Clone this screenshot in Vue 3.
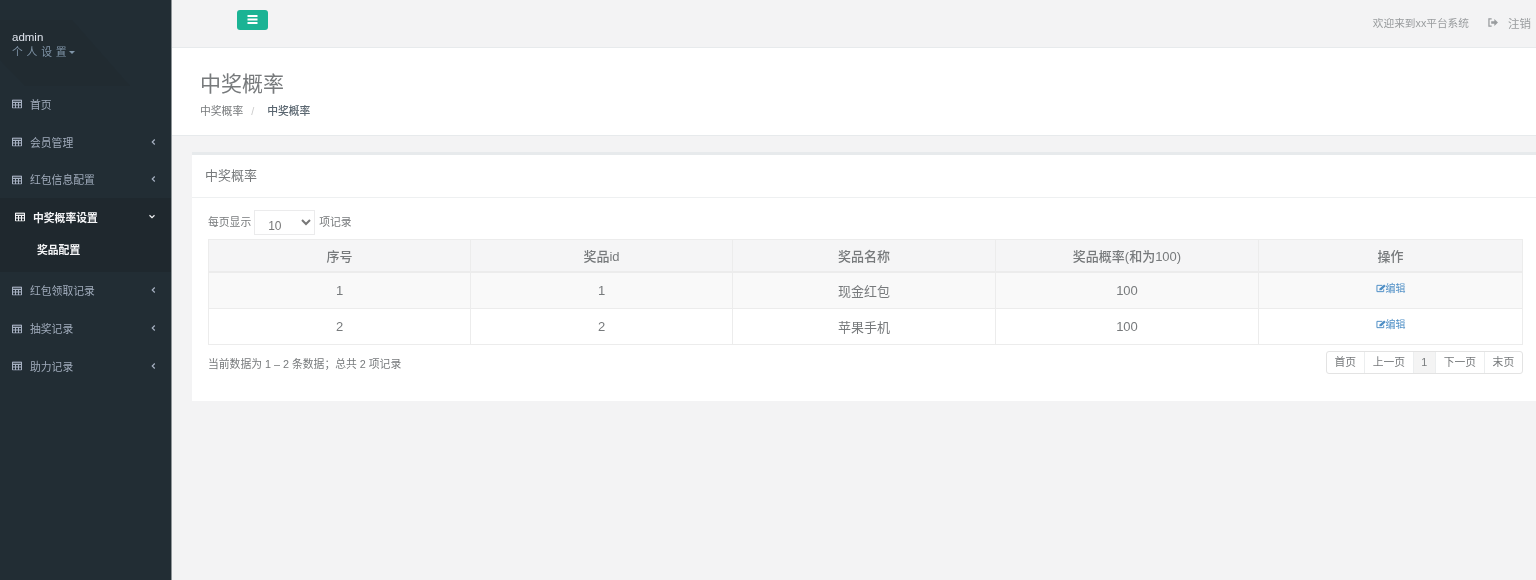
<script setup>
const menu = [
  { label: '首页' },
  { label: '会员管理', arrow: true },
  { label: '红包信息配置', arrow: true },
  { label: '中奖概率设置', active: true, children: ['奖品配置'] },
  { label: '红包领取记录', arrow: true },
  { label: '抽奖记录', arrow: true },
  { label: '助力记录', arrow: true }
]
const rows = [
  { id: 1, name: '现金红包', rate: 100 },
  { id: 2, name: '苹果手机', rate: 100 }
]
const pages = ['首页', '上一页', '1', '下一页', '末页']
</script>

<template>
  <div class="page">
    <aside class="side">
      <div class="profile">
        <svg class="shape" viewBox="0 0 130 86" width="130" height="86"><polygon points="0,20 72,20 130,86 25,86 0,60" fill="#212b31" /></svg>
        <div class="name">admin</div>
        <div class="settings">个人设置<i class="caret"></i></div>
      </div>
      <nav>
        <div v-for="m in menu" :key="m.label" :class="['group', { active: m.active }]">
          <div class="item">
            <svg class="grid" viewBox="0 0 10 9" width="10" height="9"><path d="M.5.5h9v8h-9zM.5 3h9M.5 5.500h9M3.500 3v5.500M6.500 3v5.500" fill="none" stroke="currentColor" stroke-width="1" /><path d="M0 0h10v2H0z" fill="currentColor" opacity=".6" /></svg>
            <span class="label">{{ m.label }}</span>
            <svg v-if="m.arrow" class="chev" viewBox="0 0 6 8" width="5" height="8"><path d="M4.500 1 1.500 4l3 3" fill="none" stroke="currentColor" stroke-width="1.400" /></svg>
            <svg v-if="m.active" class="chev down" viewBox="0 0 8 6" width="8" height="5"><path d="M1 1.500l3 3 3-3" fill="none" stroke="currentColor" stroke-width="1.400" /></svg>
          </div>
          <div v-for="c in m.children" :key="c" class="sub">{{ c }}</div>
        </div>
      </nav>
    </aside>

    <main class="main">
      <header class="top">
        <button class="toggle" aria-label="menu"><svg viewBox="0 0 10 9" width="11" height="9"><path d="M0 0h10v2H0zM0 3.500h10v2H0zM0 7h10v2H0z" fill="#fff" /></svg></button>
        <div class="top-right">
          <span>欢迎来到xx平台系统</span>
          <span class="logout">
            <svg viewBox="0 0 11 10" width="10" height="9"><path d="M4 1H1v8h3" fill="none" stroke="currentColor" stroke-width="1.400" /><path d="M3.500 3.500H7V1l4 4-4 4V6.500H3.500z" fill="currentColor" /></svg>
            <span class="out">注销</span>
          </span>
        </div>
      </header>

      <section class="heading">
        <h2>中奖概率</h2>
        <div class="crumbs"><span>中奖概率</span><span class="sep">/</span><strong>中奖概率</strong></div>
      </section>

      <section class="content">
        <div class="card">
          <div class="card-title">中奖概率</div>
          <div class="card-body">
            <div class="length">
              <span>每页显示</span>
              <select><option>10</option></select>
              <span>项记录</span>
            </div>
            <table>
              <thead>
                <tr><th>序号</th><th>奖品id</th><th>奖品名称</th><th>奖品概率(和为100)</th><th>操作</th></tr>
              </thead>
              <tbody>
                <tr v-for="r in rows" :key="r.id">
                  <td>{{ r.id }}</td>
                  <td>{{ r.id }}</td>
                  <td>{{ r.name }}</td>
                  <td>{{ r.rate }}</td>
                  <td class="ops">
                    <a class="edit">
                      <svg viewBox="0 0 11 10" width="10" height="9"><path d="M8.500 6v2.500h-7.500v-7h6" fill="none" stroke="currentColor" stroke-width="1.100" /><path d="M3.500 7 4 5l5-4.500 1.800 1.800L6 7z" fill="currentColor" /></svg>编辑
                    </a>
                  </td>
                </tr>
              </tbody>
            </table>
            <div class="foot">
              <div class="info">当前数据为 1 – 2 条数据；总共 2 项记录</div>
              <div class="pager">
                <span v-for="p in pages" :key="p" :class="{ on: p === '1' }">{{ p }}</span>
              </div>
            </div>
          </div>
        </div>
      </section>
    </main>
  </div>
</template>

<style>
html, body { margin: 0; background: #f3f3f4; }
</style>

<style scoped>
.page {
  display: flex;
  height: 580px;
  overflow: hidden;
  background: #f3f3f4;
  color: #777a7c;
  font-family: "Liberation Sans", "Noto Sans CJK SC", sans-serif;
  font-size: 10.8px;
  filter: blur(0.35px);
}
.side { width: 171px; flex: none; background: #222d34; border-right: 1px solid #8f9598; box-sizing: content-box; }
.profile { position: relative; height: 85px; box-sizing: border-box; padding: 30px 12px 0; background: #222d34; }
.shape { position: absolute; left: 0; top: 0; }
.name, .settings { position: relative; }
.name { color: #dfe4ed; font-size: 11.500px; line-height: 15px; }
.settings { color: #8095a8; font-size: 10.8px; line-height: 15px; letter-spacing: 3.8px; display: flex; align-items: center; }
.caret { width: 0; height: 0; margin-left: -1px; border: 3px solid transparent; border-top: 3px solid #8095a8; border-bottom: 0; }
.item { height: 37.7px; display: flex; align-items: center; padding: 0 15px 0 12px; color: #a0abbb; }
.grid { flex: none; color: #a7b1c2; transform: translateY(0.5px); }
.label { margin-left: 8px; flex: 1; }
.chev { flex: none; color: #a7b1c2; }
.group.active { background: #1f282e; border-left: 3px solid #1f282e; height: 73.500px; }
.active .item { color: #f4f5f7; font-weight: 700; padding-left: 12px; padding-right: 15px; }
.active .grid, .active .chev { color: #f4f5f7; }
.sub { color: #f4f5f7; font-weight: 700; font-size: 10.8px; line-height: 25px; padding: 0 0 0 34px; margin-top: 2px; }

.main { flex: 1; min-width: 0; display: flex; flex-direction: column; }
.top { height: 47px; flex: none; display: flex; justify-content: space-between; padding: 0 5px 0 65px; border-bottom: 1px solid #e7eaec; box-sizing: content-box; }
.toggle { width: 31px; height: 19.500px; margin-top: 10px; padding: 0; border: 0; border-radius: 3px; background: #1ab394; display: flex; align-items: center; justify-content: center; }
.top-right { display: flex; gap: 19px; height: 45px; align-items: center; color: #999c9e; font-size: 10.700px; }
.logout { display: flex; align-items: center; gap: 10px; }
.out { font-size: 11.500px; }
.heading { height: 88px; flex: none; background: #fff; border-bottom: 1px solid #e7eaec; padding: 0 28px; box-sizing: border-box; }
h2 { margin: 0; padding-top: 21px; font-size: 21px; line-height: 29px; font-weight: 400; color: #777a7c; }
.crumbs { margin-top: 6px; line-height: 15px; display: flex; }
.sep { margin: 0 9px 0 8px; color: #ccc; }
.crumbs strong { margin-left: 4px; color: #5a6670; font-weight: 500; }
.content { padding: 16px 0 0 20px; }
.card { background: #fff; border-top: 3px solid #e7eaec; }
.card-title { height: 42px; line-height: 42px; padding-left: 13px; font-size: 13px; border-bottom: 1px solid #eef0f1; box-sizing: content-box; }
.card-body { padding: 12px 13px 27px 16px; }
.length { height: 29px; display: flex; align-items: flex-start; gap: 4px; line-height: 24px; }
select { width: 61px; height: 25px; padding: 7px 0 0 9px; font: 400 12px "Liberation Sans", sans-serif; color: #777; background: #fff; border: 1px solid #ebebec; }
.length span:first-child { margin-right: -1px; }
table { width: 100%; table-layout: fixed; border-collapse: collapse; font-size: 13px; }
th:nth-child(1), th:nth-child(2) { width: 261px; }
th:nth-child(3), th:nth-child(4) { width: 262px; }
th, td { border: 1px solid #ececec; text-align: center; padding: 0 0 1px; }
th { height: 30px; background: #f5f5f6; border-bottom-width: 2px; font-weight: 500; color: #777a7c; }
td { height: 34px; color: #777a7c; }
tbody tr:nth-child(odd) { background: #f9f9f9; }
.ops { vertical-align: top; padding: 8px 0 0; height: 27px; }
.edit { display: inline-flex; align-items: center; color: #4f8fc6; font-size: 10px; line-height: 14px; }
.foot { display: flex; justify-content: space-between; align-items: flex-start; margin-top: 6px; }
.info { margin-top: 6px; line-height: 15px; }
.pager { display: flex; border: 1px solid #e3e3e3; border-radius: 3px; height: 21px; line-height: 21px; background: #fff; }
.pager span { padding: 0 7.800px; border-left: 1px solid #eceeef; }
.pager span:first-child { border-left: 0; }
.pager .on { background: #f4f4f4; padding: 0 7.500px; }
</style>
